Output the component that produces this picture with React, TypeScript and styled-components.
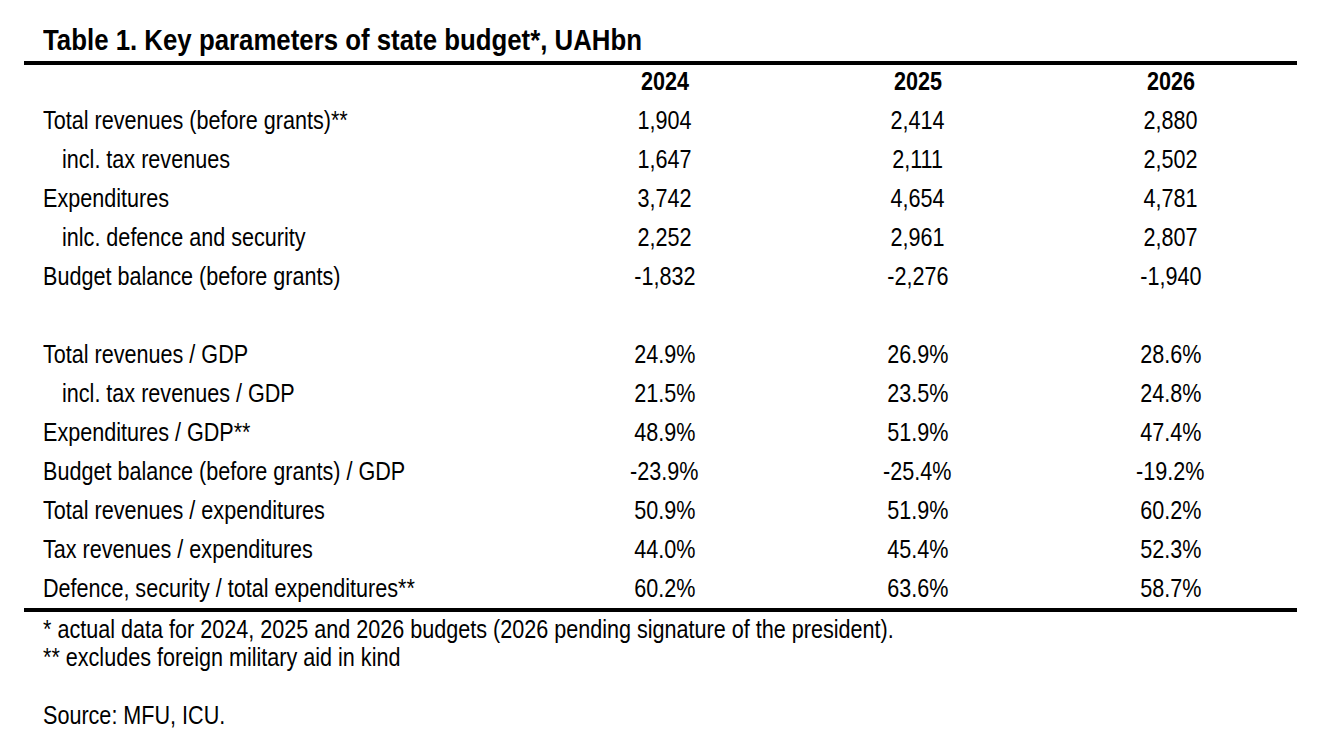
import React from "react";
import styled, { createGlobalStyle } from "styled-components";

const GlobalStyle = createGlobalStyle`
  html, body {
    margin: 0;
    padding: 0;
    background: #ffffff;
  }
  body {
    font-family: "Liberation Sans", Arial, sans-serif;
    color: #000000;
  }
`;

// Arial Narrow is not installed: Liberation Sans squeezed horizontally stands in for it.
const Narrow = styled.span<{ $origin?: string; $scale?: number }>`
  display: inline-block;
  white-space: nowrap;
  transform: scaleX(${(p) => p.$scale || 0.83});
  transform-origin: ${(p) => p.$origin || "left"} center;
`;

const Page = styled.div`
  width: 1327px;
  height: 740px;
  padding: 20px 30px 0 24px;
  box-sizing: border-box;
`;

const Title = styled.h1`
  margin: 0;
  padding-left: 19px;
  font-size: 29px;
  font-weight: 700;
  line-height: 41px;
`;

const Table = styled.div`
  border-top: 4px solid #000;
  border-bottom: 4px solid #000;
`;

const Row = styled.div<{ $header?: boolean }>`
  display: grid;
  grid-template-columns: 514px 253px 253px 253px;
  box-sizing: border-box;
  height: ${(p) => (p.$header ? "36px" : "39px")};
  padding-bottom: ${(p) => (p.$header ? "4px" : "0")};
  align-items: center;
  font-size: 26px;
  font-weight: ${(p) => (p.$header ? 700 : 400)};
`;

const Label = styled.div<{ $indent?: boolean }>`
  padding-left: ${(p) => (p.$indent ? "38px" : "19px")};
`;

const Cell = styled.div`
  text-align: center;
`;

const Notes = styled.div`
  padding: 3px 0 0 19px;
  font-size: 26px;
  line-height: 28px;
`;

const Note = styled.p<{ $gap?: boolean }>`
  margin: ${(p) => (p.$gap ? "30px 0 0" : "0")};
`;

type Line = { label: string; indent?: boolean; values: string[] } | null;

const lines: Line[] = [
  { label: "Total revenues (before grants)**", values: ["1,904", "2,414", "2,880"] },
  { label: "incl. tax revenues", indent: true, values: ["1,647", "2,111", "2,502"] },
  { label: "Expenditures", values: ["3,742", "4,654", "4,781"] },
  { label: "inlc. defence and security", indent: true, values: ["2,252", "2,961", "2,807"] },
  { label: "Budget balance (before grants)", values: ["-1,832", "-2,276", "-1,940"] },
  null,
  { label: "Total revenues / GDP", values: ["24.9%", "26.9%", "28.6%"] },
  { label: "incl. tax revenues / GDP", indent: true, values: ["21.5%", "23.5%", "24.8%"] },
  { label: "Expenditures / GDP**", values: ["48.9%", "51.9%", "47.4%"] },
  { label: "Budget balance (before grants) / GDP", values: ["-23.9%", "-25.4%", "-19.2%"] },
  { label: "Total revenues / expenditures", values: ["50.9%", "51.9%", "60.2%"] },
  { label: "Tax revenues / expenditures", values: ["44.0%", "45.4%", "52.3%"] },
  { label: "Defence, security / total expenditures**", values: ["60.2%", "63.6%", "58.7%"] },
];

const years = ["2024", "2025", "2026"];

export default function App() {
  return (
    <Page>
      <GlobalStyle />
      <Title>
        <Narrow $scale={0.89}>Table 1. Key parameters of state budget*, UAHbn</Narrow>
      </Title>
      <Table>
        <Row $header>
          <Label />
          {years.map((y) => (
            <Cell key={y}>
              <Narrow $origin="center">{y}</Narrow>
            </Cell>
          ))}
        </Row>
        {lines.map((line, i) =>
          line ? (
            <Row key={i}>
              <Label $indent={line.indent}>
                <Narrow>{line.label}</Narrow>
              </Label>
              {line.values.map((v, j) => (
                <Cell key={j}>
                  <Narrow $origin="center">{v}</Narrow>
                </Cell>
              ))}
            </Row>
          ) : (
            <Row key={i} />
          )
        )}
      </Table>
      <Notes>
        <Note>
          <Narrow>* actual data for 2024, 2025 and 2026 budgets (2026 pending signature of the president).</Narrow>
        </Note>
        <Note>
          <Narrow>** excludes foreign military aid in kind</Narrow>
        </Note>
        <Note $gap>
          <Narrow>Source: MFU, ICU.</Narrow>
        </Note>
      </Notes>
    </Page>
  );
}
